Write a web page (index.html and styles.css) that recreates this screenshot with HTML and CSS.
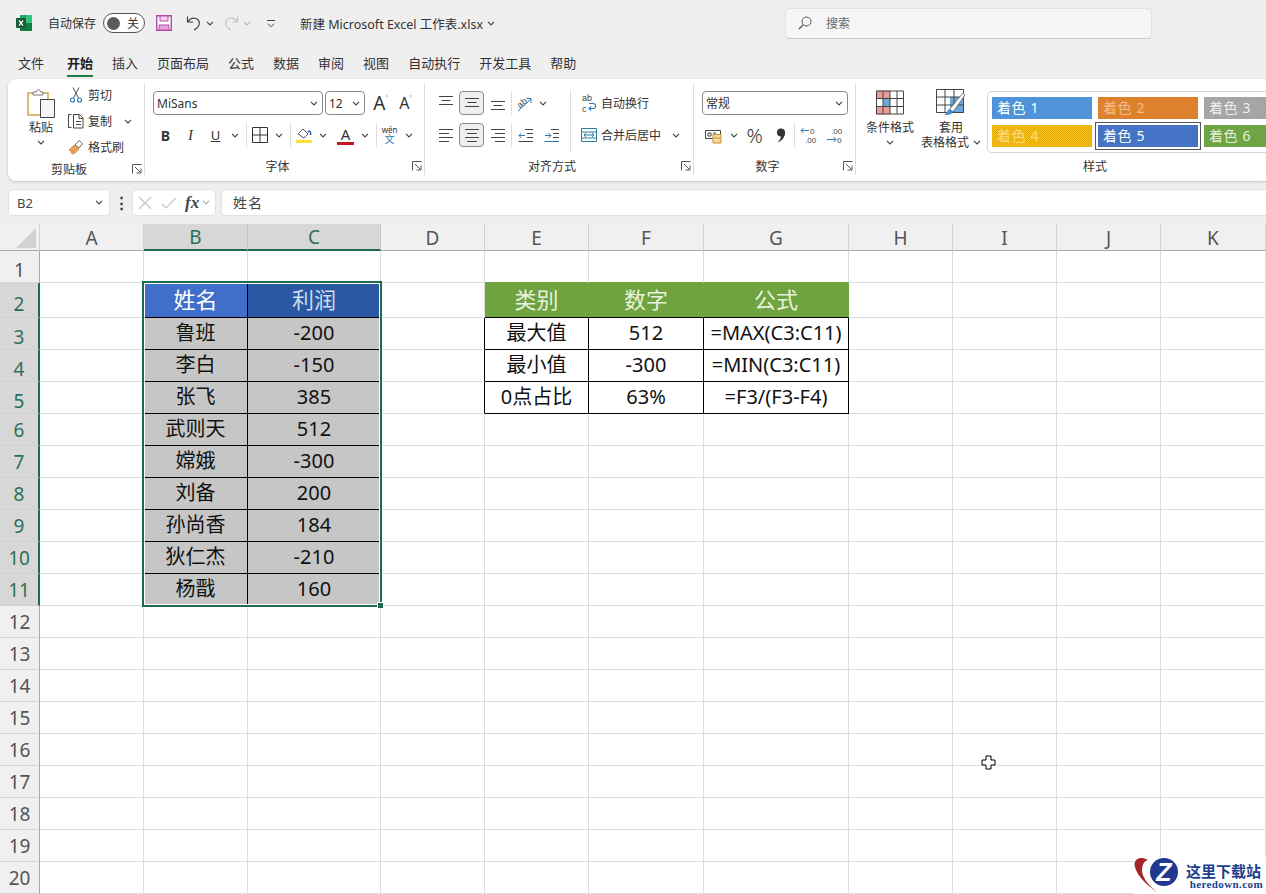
FILE: index.html
```html
<!DOCTYPE html>
<html lang="zh-CN">
<head>
    <meta charset="UTF-8">
    <title>新建 Microsoft Excel 工作表.xlsx</title>
    <link rel="stylesheet" href="styles.css">
</head>
<body>
    <svg class="sprites" width="0" height="0">
        <symbol id="chev" viewBox="0 0 8 5"><path d="M1 .8l3 3 3-3" fill="none" stroke="#444" stroke-width="1.2"/></symbol>
        <symbol id="launcher" viewBox="0 0 10 10"><path d="M.5 9.500V.5h9M3 3l5.500 5.500M4.500 9h4.500V4.500" fill="none" stroke="#555"/></symbol>
        <symbol id="v-top" viewBox="0 0 16 16"><path d="M1 1.500h14M3.500 5.500h9M1 9.500h14" stroke="#444" fill="none"/></symbol>
        <symbol id="v-mid" viewBox="0 0 16 16"><path d="M1 3.500h14M3.500 7.500h9M1 11.500h14" stroke="#444" fill="none"/></symbol>
        <symbol id="v-bot" viewBox="0 0 16 16"><path d="M1 6.500h14M3.500 10.500h9M1 14.500h14" stroke="#444" fill="none"/></symbol>
        <symbol id="h-left" viewBox="0 0 16 16"><path d="M1 2.500h14M1 6.500h10M1 10.500h14M1 14.500h10" stroke="#444" fill="none"/></symbol>
        <symbol id="h-mid" viewBox="0 0 16 16"><path d="M1 2.500h14M3 6.500h10M1 10.500h14M3 14.500h10" stroke="#444" fill="none"/></symbol>
        <symbol id="h-right" viewBox="0 0 16 16"><path d="M1 2.500h14M5 6.500h10M1 10.500h14M5 14.500h10" stroke="#444" fill="none"/></symbol>
    </svg>

    <header class="titlebar">
        <svg class="excel-logo" width="16" height="16" viewBox="0 0 16 16">
            <rect x="4" y="0" width="12" height="16" rx="1" fill="#21a366"/>
            <rect x="4" y="8" width="12" height="8" fill="#107c41"/>
            <rect x="10" y="0" width="6" height="8" fill="#33c481"/>
            <rect x="0" y="3" width="10" height="10" rx="1" fill="#185c37"/>
            <path d="M3 5.500l4 5M7 5.500l-4 5" stroke="#fff" stroke-width="1.300"/>
        </svg>
        <span class="autosave-label">自动保存</span>
        <span class="toggle"><span class="toggle-dot"></span>关</span>
        <svg class="save-icon" width="16" height="16" viewBox="0 0 16 16">
            <path d="M.7.7h14.600v14.600H.7z" fill="#fff" stroke="#b14aa8" stroke-width="1.400"/>
            <path d="M4 1h8v5H4z" fill="#f2d5ee" stroke="#b14aa8"/>
            <path d="M3 10h10v5H3z" fill="#e6a8de" stroke="#b14aa8"/>
        </svg>
        <svg class="undo-icon" width="16" height="16" viewBox="0 0 16 16"><path d="M1.500 1.500v5.500h5.500M1.800 6.800C4 3.500 7 2.500 10 3.500c4 1.500 4.500 6.500 1.500 9L8 15" fill="none" stroke="#444" stroke-width="1.200"/></svg>
        <span class="qa-chev"><svg class="chev"><use href="#chev"/></svg></span>
        <svg class="redo-icon" width="16" height="16" viewBox="0 0 16 16"><path d="M14.500 1.500v5.500H9M14.200 6.800C12 3.500 9 2.500 6 3.500c-4 1.500-4.500 6.500-1.500 9L8 15" fill="none" stroke="#c4c4c4" stroke-width="1.200"/></svg>
        <span class="qa-chev qa-chev--off"><svg class="chev"><use href="#chev"/></svg></span>
        <svg class="customize-icon" width="8" height="9" viewBox="0 0 8 9"><path d="M0 1.500h8M1 4.800l3 3 3-3" fill="none" stroke="#444"/></svg>
        <span class="filename">新建 Microsoft Excel 工作表.xlsx</span>
        <svg class="chev filename-chev"><use href="#chev"/></svg>
        <div class="search">
            <svg width="14" height="14" viewBox="0 0 14 14"><circle cx="8.500" cy="5.500" r="4.500" fill="none" stroke="#555"/><path d="M5 9l-4 4" stroke="#555" stroke-width="1.200"/></svg>
            <span>搜索</span>
        </div>
    </header>

    <nav class="tabs">
        <span>文件</span>
        <span class="tab-active">开始</span>
        <span>插入</span>
        <span>页面布局</span>
        <span>公式</span>
        <span>数据</span>
        <span>审阅</span>
        <span>视图</span>
        <span>自动执行</span>
        <span>开发工具</span>
        <span>帮助</span>
    </nav>

    <section class="ribbon">
        <div class="group group-clip">
            <div class="group-body clip-body">
                <div class="big-btn paste-btn">
                    <svg width="28" height="30" viewBox="0 0 28 30">
                        <path d="M1 5h20v22H1z" fill="#fff" stroke="#d2a24c" stroke-width="1.500"/>
                        <path d="M6 7V4h3.500c.5-3 3.500-3 4 0H16v3z" fill="#fff" stroke="#777"/>
                        <path d="M13.500 11.500h14v18h-14z" fill="#f6f6f6" stroke="#444"/>
                    </svg>
                    <span class="big-text">粘贴</span>
                    <svg class="chev"><use href="#chev"/></svg>
                </div>
                <div class="clip-rows">
                    <div class="clip-row">
                        <svg width="16" height="16" viewBox="0 0 16 16"><path d="M5 .5l5.500 10.500M11 .5L5.500 11" stroke="#555" fill="none"/><circle cx="4.500" cy="13" r="2" fill="none" stroke="#2f7ab8" stroke-width="1.200"/><circle cx="11.500" cy="13" r="2" fill="none" stroke="#2f7ab8" stroke-width="1.200"/></svg>
                        <span>剪切</span>
                    </div>
                    <div class="clip-row">
                        <svg width="16" height="16" viewBox="0 0 16 16"><path d="M3.500 1.500h-3v13h3" fill="none" stroke="#444"/><path d="M5.500 1.500h6l3.500 3.500v10h-9.500zM11 1.500V5.500h4M8 8.500h5M8 11.500h5" fill="#fff" stroke="#444"/></svg>
                        <span>复制</span>
                        <span class="clip-chev"><svg class="chev"><use href="#chev"/></svg></span>
                    </div>
                    <div class="clip-row">
                        <svg width="16" height="16" viewBox="0 0 16 16"><path d="M1 11l5-5 5 4c-2 3-5 5-7 5l1-2-2 1 1-2-2 0z" fill="#e9a259" stroke="#c9772a" stroke-width=".6"/><path d="M7 6l4-4.500 3.500 3L11 9z" fill="#fff" stroke="#666"/></svg>
                        <span>格式刷</span>
                    </div>
                </div>
            </div>
            <div class="group-label">剪贴板<svg class="launcher"><use href="#launcher"/></svg></div>
        </div>

        <div class="group group-font">
            <div class="group-body control-rows">
                <div class="ctl-row">
                    <div class="select font-select"><span>MiSans</span><svg class="chev"><use href="#chev"/></svg></div>
                    <div class="select size-select"><span>12</span><svg class="chev"><use href="#chev"/></svg></div>
                    <span class="tool grow-btn">A<sup>˄</sup></span>
                    <span class="tool shrink-btn">A<sup>˅</sup></span>
                </div>
                <div class="ctl-row">
                    <span class="tool bold-btn">B</span>
                    <span class="tool italic-btn">I</span>
                    <span class="tool underline-btn">U</span>
                    <span class="chev-btn"><svg class="chev"><use href="#chev"/></svg></span>
                    <span class="sep"></span>
                    <span class="tool"><svg width="16" height="16" viewBox="0 0 16 16"><path d="M.5.500h15v15H.5zM8 .5v15M.5 8h15" fill="none" stroke="#333"/></svg></span>
                    <span class="chev-btn"><svg class="chev"><use href="#chev"/></svg></span>
                    <span class="sep"></span>
                    <span class="tool">
                        <svg width="18" height="18" viewBox="0 0 18 18"><path d="M3 8l5-5 5 5-4 4z" fill="#fff" stroke="#555"/><path d="M13 6c2-2 3 0 2.500 3" fill="none" stroke="#1f5fa8" stroke-width="1.500"/><rect x="1" y="14" width="16" height="3" fill="#ffe135"/></svg>
                    </span>
                    <span class="chev-btn"><svg class="chev"><use href="#chev"/></svg></span>
                    <span class="tool font-color-btn"><span class="font-color-a">A</span></span>
                    <span class="chev-btn"><svg class="chev"><use href="#chev"/></svg></span>
                    <span class="sep"></span>
                    <span class="tool wen-btn"><small>wén</small><b>文</b></span>
                    <span class="chev-btn"><svg class="chev"><use href="#chev"/></svg></span>
                </div>
            </div>
            <div class="group-label">字体<svg class="launcher"><use href="#launcher"/></svg></div>
        </div>

        <div class="group group-align">
            <div class="group-body align-body">
                <div class="control-rows align-rows">
                    <div class="ctl-row">
                        <span class="tool"><svg class="ln"><use href="#v-top"/></svg></span>
                        <span class="tool tool-on"><svg class="ln"><use href="#v-mid"/></svg></span>
                        <span class="tool"><svg class="ln"><use href="#v-bot"/></svg></span>
                        <span class="sep"></span>
                        <span class="tool orient-btn">
                            <svg class="txt-icon" width="17" height="17" viewBox="0 0 17 17"><text x="1" y="11" transform="rotate(-40 6 8)" class="svg-label">ab</text><path d="M2 16L15 4M10.500 3.500H15V8" fill="none" stroke="#2f7ab8"/></svg>
                        </span>
                        <span class="chev-btn"><svg class="chev"><use href="#chev"/></svg></span>
                    </div>
                    <div class="ctl-row">
                        <span class="tool"><svg class="ln"><use href="#h-left"/></svg></span>
                        <span class="tool tool-on"><svg class="ln"><use href="#h-mid"/></svg></span>
                        <span class="tool"><svg class="ln"><use href="#h-right"/></svg></span>
                        <span class="sep"></span>
                        <span class="tool"><svg width="15" height="14" viewBox="0 0 15 14"><path d="M7 1.500h8M9 5.500h6M9 9.500h6" stroke="#444" fill="none"/><path d="M.5 13.500h14.500" stroke="#444"/><path d="M7 7.500H1M3.500 5L1 7.500 3.500 10" stroke="#2f7ab8" fill="none"/></svg></span>
                        <span class="tool"><svg width="15" height="14" viewBox="0 0 15 14"><path d="M7 1.500h8M9 5.500h6M9 9.500h6" stroke="#444" fill="none"/><path d="M.5 13.500h14.500" stroke="#2f7ab8"/><path d="M1 7.500h6M4.500 5L7 7.500 4.500 10" stroke="#2f7ab8" fill="none"/></svg></span>
                    </div>
                </div>
                <span class="sep sep-tall"></span>
                <div class="control-rows">
                    <div class="ctl-row wide-row">
                        <svg class="txt-icon" width="16" height="20" viewBox="0 0 16 20"><text x="1" y="8" class="svg-label">ab</text><text x="1" y="18.500" class="svg-label">c</text><path d="M8 10.500h4c3.500 0 3.500 5 0 5H8M10 13.500l-2 2 2 2" fill="none" stroke="#2f7ab8" stroke-width="1.100"/></svg>
                        <span>自动换行</span>
                    </div>
                    <div class="ctl-row wide-row">
                        <svg width="16" height="16" viewBox="0 0 16 16"><path d="M.5 1.500h15v13H.5zM.5 5h15M.5 11h15" fill="#fff" stroke="#2a7f9e"/><path d="M3 8h10M5 6l-2 2 2 2M11 6l2 2-2 2" fill="none" stroke="#2a7f9e"/></svg>
                        <span>合并后居中</span>
                        <span class="merge-chev"><svg class="chev"><use href="#chev"/></svg></span>
                    </div>
                </div>
            </div>
            <div class="group-label">对齐方式<svg class="launcher"><use href="#launcher"/></svg></div>
        </div>

        <div class="group group-number">
            <div class="group-body control-rows">
                <div class="ctl-row">
                    <div class="select number-select"><span>常规</span><svg class="chev"><use href="#chev"/></svg></div>
                </div>
                <div class="ctl-row num-row">
                    <span class="tool currency-btn">
                        <svg width="18" height="17" viewBox="0 0 18 17"><path d="M.5 3.500h15v8H.5z" fill="#fff" stroke="#444"/><path d="M3 6h3v3H3zM8 6h3" fill="none" stroke="#444"/><path d="M8 7.500h8v8.500H8z" fill="#f8d99a" stroke="#c98a2b"/><path d="M9 11h6" stroke="#c98a2b"/></svg>
                    </span>
                    <span class="chev-btn"><svg class="chev"><use href="#chev"/></svg></span>
                    <span class="tool percent-btn">%</span>
                    <span class="tool"><svg width="10" height="15" viewBox="0 0 10 15"><circle cx="5" cy="4.500" r="4" fill="#333"/><path d="M9 4.500C9 9 6 13 1.500 14.500 4 12 5 10 5 8z" fill="#333"/></svg></span>
                    <span class="sep"></span>
                    <span class="tool"><svg class="txt-icon" width="17" height="19" viewBox="0 0 17 19"><text x="10" y="8" class="svg-num">0</text><text x="5" y="17" class="svg-num">.00</text><path d="M9 4.500H1M3.500 2L1 4.500 3.500 7" fill="none" stroke="#2f7ab8"/></svg></span>
                    <span class="tool"><svg class="txt-icon" width="17" height="19" viewBox="0 0 17 19"><text x="5" y="8" class="svg-num">.00</text><text x="11" y="17" class="svg-num">0</text><path d="M1 13.500h9M7.500 11l2.500 2.500L7.500 16" fill="none" stroke="#2f7ab8"/></svg></span>
                </div>
            </div>
            <div class="group-label">数字<svg class="launcher"><use href="#launcher"/></svg></div>
        </div>

        <div class="group group-styles">
            <div class="group-body styles-body">
                <div class="big-btn style-btn">
                    <svg width="28" height="24" viewBox="0 0 28 24">
                        <path d="M0 0h14v8H0zM0 16h14v8H0z" fill="#e99b96"/>
                        <path d="M7 8h7v8H7z" fill="#6ea6dc"/>
                        <path d="M.5.500h27v23H.5zM7 .5v23M14 .5v23M21 .5v23M.5 8h27M.5 16h27" fill="none" stroke="#444"/>
                    </svg>
                    <span class="big-text">条件格式</span>
                    <svg class="chev"><use href="#chev"/></svg>
                </div>
                <div class="big-btn style-btn">
                    <svg width="30" height="27" viewBox="0 0 30 27">
                        <path d="M14 8h14v16H14z" fill="#6ea6dc"/>
                        <path d="M.5.500h27v23H.5zM9 .5v23M18 .5v23M.5 8h27M.5 16h27" fill="none" stroke="#444"/>
                        <path d="M13 21L27 4l2 2-12 17z" fill="#fff" stroke="#777"/>
                        <path d="M8 26c3 0 9 0 9-4l-3-2c-3 0-3 5-6 6z" fill="#3f8fd6"/>
                    </svg>
                    <span class="big-text">套用<br>表格格式<svg class="chev inline-chev"><use href="#chev"/></svg></span>
                </div>
                <div class="gallery">
                    <span class="swatch swatch-1">着色 1</span>
                    <span class="swatch swatch-2">着色 2</span>
                    <span class="swatch swatch-3">着色 3</span>
                    <span class="swatch swatch-4">着色 4</span>
                    <span class="swatch swatch-5">着色 5</span>
                    <span class="swatch swatch-6">着色 6</span>
                </div>
            </div>
            <div class="group-label">样式</div>
        </div>
    </section>

    <div class="formula-bar">
        <div class="name-box"><span>B2</span><svg class="chev"><use href="#chev"/></svg></div>
        <span class="fb-dots">⋮</span>
        <div class="fb-buttons">
            <svg width="14" height="14" viewBox="0 0 14 14"><path d="M1 1l12 12M13 1L1 13" stroke="#c6c6c6" stroke-width="1.200"/></svg>
            <svg width="16" height="14" viewBox="0 0 16 14"><path d="M1 8l4 4L15 2" fill="none" stroke="#c6c6c6" stroke-width="1.200"/></svg>
            <span class="fx">fx</span>
            <svg class="chev fx-chev"><use href="#chev"/></svg>
        </div>
        <div class="fb-input">姓名</div>
    </div>

    <main class="sheet">
        <table class="grid">
            <colgroup>
                <col class="c-head"><col class="c-a"><col class="c-b"><col class="c-c"><col class="c-d"><col class="c-e"><col class="c-f"><col class="c-g"><col class="c-h"><col class="c-i"><col class="c-j"><col class="c-k">
            </colgroup>
            <tr class="head-row">
                <th class="corner"><span class="corner-mark"></span></th>
                <th>A</th><th class="on dither">B</th><th class="on dither">C</th><th>D</th><th>E</th><th>F</th><th>G</th><th>H</th><th>I</th><th>J</th><th>K</th>
            </tr>
            <tr>
                <th class="rh low">1</th><td></td><td></td><td></td><td></td><td class="over-green"></td><td class="over-green"></td><td class="over-green"></td><td></td><td></td><td></td><td></td>
            </tr>
            <tr class="row-tall">
                <th class="rh low on dither">2</th><td></td><td class="blue-active">姓名</td><td class="blue-head dither">利润</td><td></td><td class="green">类别</td><td class="green">数字</td><td class="green">公式</td><td></td><td></td><td></td><td></td>
            </tr>
            <tr>
                <th class="rh low on dither">3</th><td></td><td class="pick">鲁班</td><td class="pick">-200</td><td class="edge"></td><td class="box">最大值</td><td class="box">512</td><td class="box">=MAX(C3:C11)</td><td></td><td></td><td></td><td></td>
            </tr>
            <tr>
                <th class="rh low on dither">4</th><td></td><td class="pick">李白</td><td class="pick">-150</td><td class="edge"></td><td class="box">最小值</td><td class="box">-300</td><td class="box">=MIN(C3:C11)</td><td></td><td></td><td></td><td></td>
            </tr>
            <tr>
                <th class="rh low on dither">5</th><td></td><td class="pick">张飞</td><td class="pick">385</td><td class="edge"></td><td class="box">0点占比</td><td class="box">63%</td><td class="box">=F3/(F3-F4)</td><td></td><td></td><td></td><td></td>
            </tr>
            <tr>
                <th class="rh on dither">6</th><td></td><td class="pick">武则天</td><td class="pick">512</td><td></td><td></td><td></td><td></td><td></td><td></td><td></td><td></td>
            </tr>
            <tr>
                <th class="rh on dither">7</th><td></td><td class="pick">嫦娥</td><td class="pick">-300</td><td></td><td></td><td></td><td></td><td></td><td></td><td></td><td></td>
            </tr>
            <tr>
                <th class="rh on dither">8</th><td></td><td class="pick">刘备</td><td class="pick">200</td><td></td><td></td><td></td><td></td><td></td><td></td><td></td><td></td>
            </tr>
            <tr>
                <th class="rh on dither">9</th><td></td><td class="pick">孙尚香</td><td class="pick">184</td><td></td><td></td><td></td><td></td><td></td><td></td><td></td><td></td>
            </tr>
            <tr>
                <th class="rh on dither">10</th><td></td><td class="pick">狄仁杰</td><td class="pick">-210</td><td></td><td></td><td></td><td></td><td></td><td></td><td></td><td></td>
            </tr>
            <tr>
                <th class="rh on dither">11</th><td></td><td class="pick">杨戬</td><td class="pick">160</td><td></td><td></td><td></td><td></td><td></td><td></td><td></td><td></td>
            </tr>
            <tr><th class="rh">12</th><td></td><td></td><td></td><td></td><td></td><td></td><td></td><td></td><td></td><td></td><td></td></tr>
            <tr><th class="rh">13</th><td></td><td></td><td></td><td></td><td></td><td></td><td></td><td></td><td></td><td></td><td></td></tr>
            <tr><th class="rh">14</th><td></td><td></td><td></td><td></td><td></td><td></td><td></td><td></td><td></td><td></td><td></td></tr>
            <tr><th class="rh">15</th><td></td><td></td><td></td><td></td><td></td><td></td><td></td><td></td><td></td><td></td><td></td></tr>
            <tr><th class="rh">16</th><td></td><td></td><td></td><td></td><td></td><td></td><td></td><td></td><td></td><td></td><td></td></tr>
            <tr><th class="rh">17</th><td></td><td></td><td></td><td></td><td></td><td></td><td></td><td></td><td></td><td></td><td></td></tr>
            <tr><th class="rh">18</th><td></td><td></td><td></td><td></td><td></td><td></td><td></td><td></td><td></td><td></td><td></td></tr>
            <tr><th class="rh">19</th><td></td><td></td><td></td><td></td><td></td><td></td><td></td><td></td><td></td><td></td><td></td></tr>
            <tr><th class="rh">20</th><td></td><td></td><td></td><td></td><td></td><td></td><td></td><td></td><td></td><td></td><td></td></tr>
        </table>

        <div class="selection"><span class="sel-handle"></span></div>

        <svg class="cursor" width="15" height="15" viewBox="0 0 15 15">
            <path d="M5 1h5v4h4v5h-4v4H5v-4H1V5h4z" fill="#fff" stroke="#000"/>
        </svg>

        <div class="watermark">
            <svg class="wm-logo" width="48" height="37" viewBox="0 0 48 37">
                <path d="M12 2C4-1-1 4 1 10c2 9 12 18 23 26C14 28 8 20 8 13c0-5 2-9 6-10z" fill="#a62626"/>
                <circle cx="30" cy="15" r="14" fill="#21388f"/>
                <text x="30" y="24" class="wm-z">Z</text>
            </svg>
            <div class="wm-text">
                <b>这里下载站</b>
                <span>heredown.com</span>
            </div>
        </div>
    </main>
</body>
</html>
```

FILE: styles.css
```css
* {
    margin: 0;
    padding: 0;
    box-sizing: border-box;
}

html, body {
    height: 100%;
    overflow: hidden;
}

body {
    background: #efefef;
    color: #333;
    font-family: "Noto Sans", "Noto Sans CJK SC", sans-serif;
    font-size: 12px;
}

.sprites {
    position: absolute;
}

svg {
    display: block;
    flex: none;
}

.txt-icon {
    overflow: visible;
}

.chev {
    width: 8px;
    height: 5px;
}

.dither {
    background-image: conic-gradient(rgba(0, 0, 0, 0.04) 25%, transparent 0 50%, rgba(0, 0, 0, 0.04) 0 75%, transparent 0);
    background-size: 2px 2px;
}

/* title bar */
.titlebar {
    display: flex;
    align-items: center;
    height: 46px;
    padding-left: 16px;
}

.autosave-label {
    margin-left: 16px;
}

.toggle {
    display: flex;
    align-items: center;
    justify-content: space-between;
    width: 42px;
    height: 20px;
    margin-left: 7px;
    padding: 0 5px 0 3px;
    border: 1px solid #555;
    border-radius: 10px;
    background: #fff;
    font-size: 12px;
}

.toggle-dot {
    width: 13px;
    height: 13px;
    border-radius: 50%;
    background: #5a5a5a;
}

.save-icon {
    margin-left: 11px;
}

.undo-icon {
    margin-left: 14px;
}

.qa-chev {
    width: 8px;
    margin: 0 9px 0 4px;
}

.qa-chev--off {
    opacity: 0.35;
    margin-right: 16px;
}

.filename {
    margin-left: 25px;
    font-size: 12.5px;
    white-space: nowrap;
}

.filename-chev {
    margin-left: 4px;
}

.search {
    display: flex;
    align-items: center;
    gap: 14px;
    width: 367px;
    height: 31px;
    margin-left: auto;
    margin-right: 114px;
    padding-left: 12px;
    border: 1px solid #e2e2e2;
    border-bottom-color: #c8c8c8;
    border-radius: 4px;
    background: #f6f6f6;
    color: #666;
}

/* tabs */
.tabs {
    display: flex;
    align-items: center;
    gap: 19px;
    height: 33px;
    padding-left: 18px;
    font-size: 13px;
}

.tabs span {
    position: relative;
}

.tab-active {
    margin-left: 4px;
    font-weight: 700;
    color: #222;
}

.tab-active::after {
    content: '';
    position: absolute;
    left: 0;
    right: 0;
    bottom: -5px;
    height: 2px;
    background: #1f7a4d;
}

/* ribbon */
.ribbon {
    display: flex;
    height: 102px;
    margin-left: 8px;
    border-radius: 8px 0 0 8px;
    background: #fff;
    box-shadow: 0 1px 3px rgba(0, 0, 0, 0.2);
    overflow: hidden;
}

.group {
    display: flex;
    flex-direction: column;
    flex: none;
    height: 91px;
    margin-top: 5px;
    border-right: 1px solid #dcdcdc;
}

.group-clip { width: 137px; }
.group-font { width: 280px; }
.group-align { width: 269px; }
.group-number { width: 162px; }
.group-styles { width: 492px; border-right: none; }

.group-body {
    height: 74px;
}

.group-label {
    position: relative;
    margin-top: 6px;
    padding-right: 14px;
    text-align: center;
    line-height: 16px;
}

.launcher {
    position: absolute;
    right: 2px;
    top: 2px;
    width: 10px;
    height: 10px;
}

.clip-body {
    display: flex;
    padding: 2px 0 0 13px;
}

.big-btn {
    display: flex;
    flex-direction: column;
    align-items: center;
}

.big-text {
    line-height: 15px;
    text-align: center;
    white-space: nowrap;
}

.paste-btn {
    width: 40px;
    padding-top: 2px;
}

.paste-btn .big-text {
    margin-top: 2px;
}

.paste-btn .chev {
    margin-top: 5px;
}

.clip-rows {
    display: flex;
    flex-direction: column;
    gap: 8px;
    margin-left: 5px;
}

.clip-row {
    display: flex;
    align-items: center;
    gap: 4px;
    height: 18px;
    padding-left: 2px;
}

.clip-chev {
    margin-left: 8px;
}

.control-rows {
    display: flex;
    flex-direction: column;
    gap: 8px;
    padding: 7px 0 0 8px;
}

.ctl-row {
    display: flex;
    align-items: center;
    height: 24px;
}

.select {
    display: flex;
    align-items: center;
    justify-content: space-between;
    height: 24px;
    padding: 0 4px 0 3px;
    border: 1px solid #8a8a8a;
    border-radius: 4px;
    background: #fff;
}

.font-select { width: 170px; }

.size-select {
    width: 40px;
    margin-left: 2px;
}

.number-select { width: 146px; }

.tool {
    display: flex;
    align-items: center;
    justify-content: center;
    flex: none;
    width: 25px;
    height: 24px;
    color: #333;
}

.chev-btn {
    display: flex;
    justify-content: center;
    flex: none;
    width: 14px;
}

.sep {
    flex: none;
    width: 1px;
    height: 24px;
    margin-left: 4px;
    background: #dcdcdc;
}

.grow-btn {
    margin-left: 3px;
    font-size: 19px;
}

.shrink-btn {
    font-size: 16px;
}

.grow-btn sup,
.shrink-btn sup {
    margin-top: -9px;
    font-size: 8px;
    line-height: 1;
    color: #2f7ab8;
}

.bold-btn {
    font-weight: 700;
    font-size: 14px;
}

.italic-btn {
    font-family: "Liberation Serif", serif;
    font-style: italic;
    font-size: 15px;
}

.underline-btn {
    text-decoration: underline;
    font-size: 13px;
}

.font-color-btn {
    margin-left: 3px;
}

.font-color-a {
    width: 17px;
    border-bottom: 3px solid #c8161d;
    font-size: 15px;
    line-height: 16px;
    text-align: center;
}

.wen-btn {
    flex-direction: column;
    line-height: 1;
}

.wen-btn small {
    font-size: 8px;
}

.wen-btn b {
    font-weight: 400;
    font-size: 10px;
    color: #2f7ab8;
}

.align-body {
    display: flex;
}

.align-rows .ctl-row {
    gap: 1px;
}

.align-rows {
    width: 145px;
}

.align-rows .sep {
    margin-left: 0;
}

.orient-btn {
    width: 22px;
}

.tool-on {
    border: 1px solid #8a8a8a;
    border-radius: 4px;
    background: #efefef;
}

.ln {
    width: 16px;
    height: 16px;
}

.svg-label {
    font-family: "Liberation Sans", sans-serif;
    font-size: 9px;
    fill: #444;
}

.svg-num {
    font-family: "Liberation Sans", sans-serif;
    font-size: 8px;
    fill: #444;
}

.sep-tall {
    height: 62px;
    margin: 6px 0 0 0;
}

.wide-row {
    gap: 4px;
    padding-left: 2px;
    white-space: nowrap;
}

.merge-chev {
    margin-left: 7px;
}

.num-row {
    gap: 1px;
}

.num-row .sep {
    margin-left: 0;
}

.currency-btn {
    width: 24px;
}

.percent-btn {
    font-size: 20px;
    font-weight: 300;
}

.styles-body {
    display: flex;
    align-items: flex-start;
    padding-left: 4px;
}

.style-btn {
    flex: none;
    width: 60px;
    margin-right: 1px;
    padding-top: 5px;
}

.style-btn svg:first-child {
    height: 27px;
}

.style-btn .big-text {
    margin-top: 4px;
}

.style-btn > .chev {
    margin-top: 5px;
}

.inline-chev {
    display: inline-block;
    margin-left: 4px;
    vertical-align: 2px;
}

.gallery {
    flex: none;
    display: grid;
    grid-template-columns: repeat(3, 100px);
    grid-template-rows: 22px 22px;
    gap: 6px;
    width: 320px;
    height: 62px;
    margin: 7px 0 0 5px;
    padding: 5px 0 0 4px;
    border: 1px solid #d4d4d4;
    border-right: none;
    border-radius: 5px 0 0 5px;
}

.swatch {
    padding-left: 5px;
    color: #fff;
    font-size: 14px;
    letter-spacing: 0.6px;
    line-height: 22px;
    white-space: nowrap;
}

.swatch-1 { background-color: #5093d8; }
.swatch-3 { background-color: #a5a5a5; color: #eee; }
.swatch-5 { background-color: #4472c4; outline: 1px solid #555; outline-offset: 2px; }
.swatch-6 { background-color: #70a345; color: #e6efdc; }

.swatch-2,
.swatch-4 {
    background-image: conic-gradient(rgba(0, 0, 0, 0.1) 25%, transparent 0 50%, rgba(0, 0, 0, 0.1) 0 75%, transparent 0);
    background-size: 2px 2px;
}

.swatch-2 { background-color: #ea8830; color: #f3bd8c; }
.swatch-4 { background-color: #fcc010; color: #fbdc80; }

/* formula bar */
.formula-bar {
    display: flex;
    height: 27px;
    margin: 8px 0 0 8px;
}

.name-box {
    display: flex;
    align-items: center;
    justify-content: space-between;
    width: 102px;
    padding: 0 6px 0 8px;
    border: 1px solid #e2e2e2;
    border-radius: 4px;
    background: #fff;
    font-size: 13px;
    color: #444;
}

.fb-dots {
    width: 22px;
    text-align: center;
    font-size: 15px;
    font-weight: 700;
    line-height: 26px;
}

.fb-buttons {
    display: flex;
    align-items: center;
    width: 84px;
    gap: 5px;
    padding-left: 5px;
    border: 1px solid #e2e2e2;
    border-radius: 4px;
    background: #fff;
}

.fb-buttons svg:first-child {
    margin-right: 4px;
}

.fx {
    margin-left: 3px;
    font-family: "Liberation Serif", serif;
    font-style: italic;
    font-weight: 700;
    font-size: 17px;
    line-height: 1;
    color: #444;
}

.fx-chev {
    margin-left: -2px;
    opacity: 0.45;
}

.fb-input {
    flex: 1;
    margin-left: 5px;
    padding-left: 11px;
    border: 1px solid #e2e2e2;
    border-right: none;
    border-radius: 4px 0 0 4px;
    background: #fff;
    color: #444;
    font-size: 14px;
    letter-spacing: 1px;
    line-height: 25px;
}

/* sheet */
.sheet {
    position: relative;
    height: 670px;
    margin-top: 8px;
    background: #fff;
    overflow: hidden;
}

.grid {
    width: 1266px;
    table-layout: fixed;
    border-collapse: separate;
    border-spacing: 0;
}

.c-head { width: 40px; }
.c-a { width: 104px; }
.c-b { width: 104px; }
.c-c { width: 133px; }
.c-d { width: 104px; }
.c-e { width: 104px; }
.c-f { width: 115px; }
.c-g { width: 145px; }
.c-h { width: 104px; }
.c-i { width: 104px; }
.c-j { width: 104px; }
.c-k { width: 105px; }

.grid tr {
    height: 32px;
}

.grid .head-row {
    height: 27px;
}

.grid .row-tall {
    height: 35px;
}

.grid th {
    padding: 2px 0 0;
    border-right: 1px solid #d4d4d4;
    border-bottom: 1px solid #a9a9a9;
    background-color: #f0f0f0;
    color: #555;
    font-size: 19px;
    font-weight: 400;
    line-height: 1;
}

.grid th.rh {
    padding-top: 2px;
    border-right: 1px solid #a9a9a9;
    border-bottom: 1px solid #d4d4d4;
}

.grid th.rh.low {
    padding-top: 8px;
}

.grid th.on {
    background-color: #dcdcdc;
    color: #2f6f55;
    border-bottom: 2px solid #1f6b4d;
    border-right-color: #c6c6c6;
}

.grid th.rh.on {
    border-bottom: 1px solid #d0d0d0;
    border-right: 2px solid #1f6b4d;
}

.corner {
    position: relative;
}

.corner-mark {
    display: block;
    width: 20px;
    height: 20px;
    margin: 0 0 0 16px;
    background: #d2d2d2;
    clip-path: polygon(100% 0, 100% 100%, 0 100%);
}

.grid td {
    padding: 0 0 1px;
    border-right: 1px solid #dcdcdc;
    border-bottom: 1px solid #dcdcdc;
    color: #111;
    font-size: 20px;
    line-height: 1;
    text-align: center;
    white-space: nowrap;
}

.grid td.blue-active,
.grid td.blue-head,
.grid td.green {
    padding-bottom: 3px;
    font-size: 22px;
    color: #fff;
    border-right-color: transparent;
    border-bottom-color: #000;
}

.grid td.blue-active {
    background-color: #3f6fc9;
    border-right-color: #000;
}

.grid td.blue-head {
    background-color: #2b5aa6;
    color: #cfdcef;
}

.grid td.green {
    background-color: #6fa33f;
    color: #e9f2df;
}

.grid td.over-green {
    border-bottom-color: #6fa33f;
}

.grid td.pick {
    background-color: #c6c6c6;
    border-right-color: #000;
    border-bottom-color: #000;
}

.grid td.box {
    border-right-color: #000;
    border-bottom-color: #000;
}

.grid td.edge {
    border-right-color: #000;
}

.selection {
    position: absolute;
    left: 142px;
    top: 57px;
    width: 240px;
    height: 326px;
    border: 2px solid #1f6b4d;
    outline: 1px solid #fff;
    outline-offset: -3px;
    pointer-events: none;
}

.sel-handle {
    position: absolute;
    right: -3px;
    bottom: -3px;
    width: 5px;
    height: 5px;
    background: #1f6b4d;
    box-shadow: 0 0 0 1px #fff;
}

.cursor {
    position: absolute;
    left: 981px;
    top: 531px;
}

.watermark {
    position: absolute;
    right: 0;
    bottom: 0;
    display: flex;
    align-items: flex-end;
    width: 132px;
    height: 37px;
    background: #fff;
}

.wm-z {
    font-family: "Liberation Sans", sans-serif;
    font-size: 25px;
    font-weight: 700;
    font-style: italic;
    text-anchor: middle;
    fill: #fff;
}

.wm-text {
    display: flex;
    flex-direction: column;
    align-items: flex-end;
    width: 81px;
    padding-bottom: 4px;
    color: #1d3f8a;
    line-height: 1;
}

.wm-text b {
    margin-right: 2px;
    font-family: "Noto Sans CJK SC", sans-serif;
    font-size: 15px;
    font-weight: 700;
}

.wm-text span {
    margin-top: 1px;
    font-family: "Liberation Serif", serif;
    font-size: 11px;
    font-weight: 700;
    letter-spacing: 0.4px;
}
```
